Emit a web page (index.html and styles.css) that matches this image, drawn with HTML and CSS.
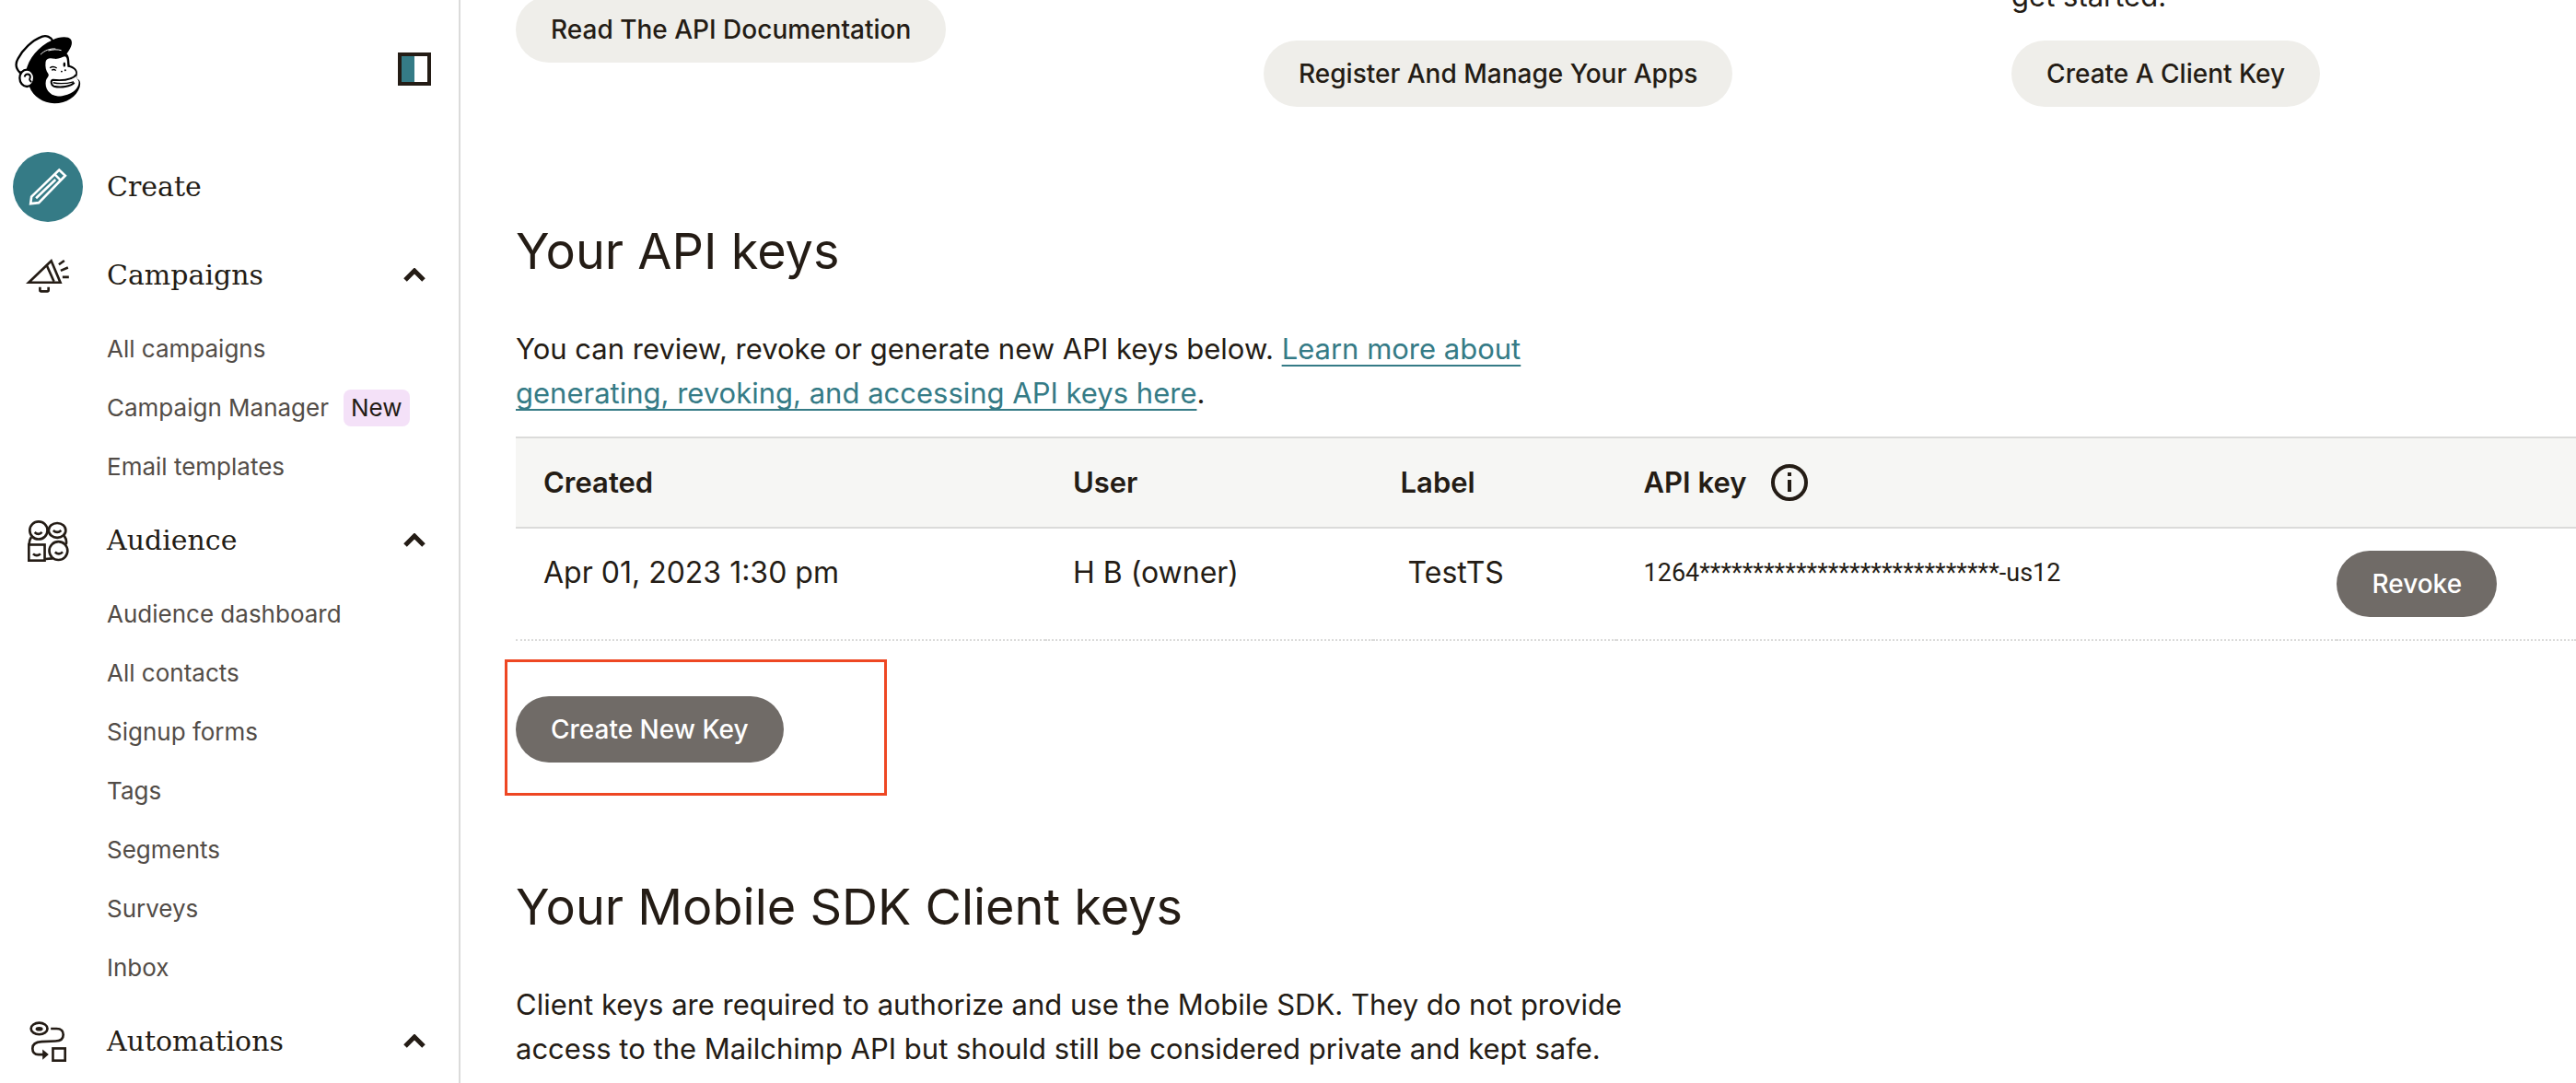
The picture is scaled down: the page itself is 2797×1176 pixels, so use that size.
FILE: index.html
```html
<!DOCTYPE html>
<html lang="en">
<head>
<meta charset="utf-8">
<meta name="viewport" content="width=device-width, initial-scale=1">
<title>API keys</title>
<link rel="stylesheet" href="styles.css">
</head>
<body>
<div class="app">
  <aside class="sidebar">
    <div class="sidebar-top">
      <a class="logo" href="#" aria-label="Home">
        <svg viewBox="46 48 221 232" width="74" height="76" aria-hidden="true">
          <path d="M64 176C50 162 48 146 57 130C72 101 104 68 138 56C152 51 166 58 173 70L120 120L86 170Z" fill="#fff" stroke="#000" stroke-width="7"/>
          <path d="M84 170C92 132 124 88 172 68C192 57 224 54 233 66C241 80 230 98 219 113C229 122 227 140 229 152C243 155 256 166 254 180C252 187 250 190 254 196C264 201 266 210 262 224C252 254 218 278 178 278C140 276 108 256 95 222Z" fill="#000"/>
          <path d="M149 140C151 127 165 126 178 130C193 132 204 123 213 122C222 124 220 142 222 157C236 158 251 167 249 180C247 190 256 196 259 206C260 236 220 255 190 254C160 252 145 226 150 203C152 193 162 188 158 180C150 170 147 155 149 140Z" fill="#fff"/>
          <path d="M251 182C240 198 208 203 173 200C165 202 166 216 176 221C200 227 232 222 244 209" fill="none" stroke="#000" stroke-width="6"/>
          <path d="M174 209C196 214 220 212 242 206M163 160C170 155 178 155 186 161M169 168C175 164 180 166 183 169" fill="none" stroke="#000" stroke-width="4"/>
          <ellipse cx="211" cy="149" rx="4" ry="8"/>
          <circle cx="202" cy="172" r="3"/><circle cx="214" cy="168" r="3"/>
          <path d="M132 116C145 102 165 95 182 97M158 103C172 99 188 98 201 102" fill="none" stroke="#fff" stroke-width="3"/>
          <ellipse cx="87" cy="194" rx="24" ry="28" fill="#fff" stroke="#000" stroke-width="7"/>
          <path d="M79 190C82 178 97 178 98 189C99 198 90 197 102 207" fill="none" stroke="#000" stroke-width="6"/>
        </svg>
      </a>
      <button class="toggle" type="button" aria-label="Collapse navigation"></button>
    </div>
    <nav>
      <a class="nav-head" href="#">
        <svg viewBox="41 43 230 230" width="76" height="76" aria-hidden="true">
          <circle cx="156" cy="158" r="115" fill="#357b86"/>
          <g fill="none" stroke="#fff" stroke-width="8"><path d="M193 102L213 121L126 210L99 213L102 190Z"/><path d="M178 116L199 137M117 195L181 134"/></g>
        </svg>
        <span class="nav-title">Create</span>
      </a>
      <button class="nav-head" type="button">
        <span class="nav-icon"><svg viewBox="84 390 144 118" width="48" height="39" fill="none" stroke="#241c15" stroke-width="8" aria-hidden="true"><path d="M93 471L167 400L197 471Z"/><path d="M152 414L176 468M130 486V496Q130 500 134 500H154Q158 500 158 496V486M192 412L210 399M198 432L222 422M204 453H225"/></svg></span>
        <span class="nav-title">Campaigns</span>
        <svg class="chevron" viewBox="0 0 24 16" width="24" height="16" aria-hidden="true"><path d="M2 13L12 3L22 13"/></svg>
      </button>
      <ul class="nav-list">
        <li><a href="#">All campaigns</a></li>
        <li><a href="#">Campaign Manager</a><span class="badge">New</span></li>
        <li><a href="#">Email templates</a></li>
      </ul>
      <button class="nav-head" type="button">
        <span class="nav-icon"><svg viewBox="90 68 136 142" width="45" height="47" fill="none" stroke="#241c15" stroke-width="8" aria-hidden="true"><circle cx="126" cy="104" r="29"/><ellipse cx="187" cy="104" rx="28" ry="24"/><rect x="94" y="151" width="52" height="52"/><circle cx="191" cy="171" r="30"/><path d="M102 126Q94 138 95 151M210 122Q220 136 216 150M148 198L172 196M113 110Q126 122 137 110M174 104Q187 116 200 104M108 181Q120 192 132 181M180 175Q193 187 205 175"/></svg></span>
        <span class="nav-title">Audience</span>
        <svg class="chevron" viewBox="0 0 24 16" width="24" height="16" aria-hidden="true"><path d="M2 13L12 3L22 13"/></svg>
      </button>
      <ul class="nav-list">
        <li><a href="#">Audience dashboard</a></li>
        <li><a href="#">All contacts</a></li>
        <li><a href="#">Signup forms</a></li>
        <li><a href="#">Tags</a></li>
        <li><a href="#">Segments</a></li>
        <li><a href="#">Surveys</a></li>
        <li><a href="#">Inbox</a></li>
      </ul>
      <button class="nav-head" type="button">
        <span class="nav-icon"><svg viewBox="95 86 124 136" width="41" height="45" fill="none" stroke="#241c15" stroke-width="8" aria-hidden="true"><ellipse cx="127" cy="110" rx="27" ry="19"/><ellipse cx="127" cy="111" rx="12" ry="7" fill="#241c15" stroke="none"/><path d="M165 110H184C200 110 206 120 206 130C206 145 195 151 180 151L135 153C115 154 105 162 105 175C105 188 112 195 125 195H142"/><path d="M138 178L158 195L138 212Z" fill="#241c15" stroke="none"/><rect x="172" y="175" width="40" height="40"/></svg></span>
        <span class="nav-title">Automations</span>
        <svg class="chevron" viewBox="0 0 24 16" width="24" height="16" aria-hidden="true"><path d="M2 13L12 3L22 13"/></svg>
      </button>
    </nav>
  </aside>
  <main class="main">
    <div class="cards">
      <div class="card card-short"><button class="btn" type="button">Read The API Documentation</button></div>
      <div class="card card-mid"><button class="btn" type="button">Register And Manage Your Apps</button></div>
      <div class="card"><p>get started!</p><button class="btn" type="button">Create A Client Key</button></div>
    </div>
    <section class="section">
      <h2>Your API keys</h2>
      <p class="copy">You can review, revoke or generate new API keys below. <a href="#">Learn more about generating, revoking, and accessing API keys here</a>.</p>
      <table class="keys">
        <colgroup><col class="col-created"><col class="col-user"><col class="col-label"><col class="col-key"><col></colgroup>
        <thead>
          <tr><th scope="col">Created</th><th scope="col">User</th><th scope="col">Label</th><th scope="col"><span class="th-key">API key
            <svg width="42" height="42" viewBox="0 0 42 42" fill="none" stroke="#241c15" stroke-width="4" role="img" aria-label="Info"><circle cx="21" cy="21" r="18"/><path d="M21 18V31M21 10V14"/></svg></span></th><td></td></tr>
        </thead>
        <tbody>
          <tr><td>Apr 01, 2023 1:30 pm</td><td>H B (owner)</td><td class="label-cell">TestTS</td><td class="key-cell">1264****************************-us12</td><td class="action-cell"><button class="btn btn-dark" type="button">Revoke</button></td></tr>
        </tbody>
      </table>
      <div class="highlight"><button class="btn btn-dark" type="button">Create New Key</button></div>
    </section>
    <section class="section section-sdk">
      <h2>Your Mobile SDK Client keys</h2>
      <p class="copy">Client keys are required to authorize and use the Mobile SDK. They do not provide access to the Mailchimp API but should still be considered private and kept safe.</p>
    </section>
  </main>
</div>
</body>
</html>
```
FILE: styles.css
```css
* { box-sizing: border-box; }

body {
  margin: 0;
  background: #fff;
  color: #241c15;
  font-family: Inter, "Liberation Sans", sans-serif;
  font-size: 31px;
  line-height: 48px;
}

h2, p, ul { margin: 0; padding: 0; font-weight: 400; }
button { font-family: inherit; color: inherit; border: 0; cursor: pointer; }
svg { display: block; flex: none; }

.app { display: flex; height: 100vh; overflow: hidden; }

/* Sidebar */
.sidebar {
  flex: none;
  width: 500px;
  overflow: hidden;
  border-right: 2px solid #dbdbda;
}
.sidebar-top {
  display: flex;
  align-items: center;
  justify-content: space-between;
  padding: 37px 30px 42px 15px;
}
.toggle {
  width: 36px;
  height: 36px;
  padding: 0;
  border: 4px solid #241c15;
  background: linear-gradient(to right, #357b86 50%, #fff 50%);
}
.nav-head {
  display: flex;
  align-items: center;
  gap: 26px;
  width: 100%;
  height: 96px;
  padding: 0 36px 0 14px;
  background: none;
  color: #241c15;
  text-align: left;
  text-decoration: none;
}
.nav-icon { display: flex; justify-content: center; width: 76px; }
.nav-title {
  flex: 1;
  font-family: "DejaVu Serif", serif;
  font-size: 30px;
  line-height: 40px;
}
.chevron { fill: none; stroke: #241c15; stroke-width: 5px; }
.nav-list { list-style: none; }
.nav-list li {
  display: flex;
  align-items: center;
  gap: 16px;
  height: 64px;
  padding-left: 116px;
  font-size: 26px;
}
.nav-list a { color: #524c47; text-decoration: none; }
.badge {
  padding: 0 8px;
  border-radius: 8px;
  background: #f4e1f8;
  line-height: 40px;
}

/* Content */
.main { flex: 1; min-width: 0; padding-left: 60px; }
.cards {
  display: grid;
  grid-template-columns: 53fr 53fr 40fr;
  align-items: start;
  margin-top: -28px;
}
.card-short { padding-top: 24px; }
.card-mid { padding-top: 72px; }
.card p { margin-bottom: 24px; }
.btn {
  display: block;
  height: 72px;
  padding: 0 38px;
  border-radius: 36px;
  background: #efeeea;
  font-size: 28px;
  font-weight: 500;
  line-height: 40px;
  white-space: nowrap;
}
.btn-dark { background: #706b67; color: #fff; }

.section { padding-top: 125px; }
.section-sdk { padding-top: 89px; }
h2 { margin-bottom: 50px; font-size: 54px; line-height: 64px; }
.copy { max-width: 1250px; }
.copy a {
  color: #357b86;
  text-decoration: underline;
  text-decoration-thickness: 2px;
  text-decoration-skip-ink: none;
  text-underline-offset: 6px;
}

.keys {
  width: 100%;
  margin-top: 23px;
  border-spacing: 0;
  table-layout: fixed;
  font-size: 32px;
}
.col-created { width: 25.7%; }
.col-user { width: 15.9%; }
.col-label { width: 11.8%; }
.col-key { width: 35%; }
.keys th, .keys td {
  padding: 24px 0 24px 30px;
  text-align: left;
  vertical-align: top;
  white-space: nowrap;
}
.keys thead th, .keys thead td {
  border: solid #dbdbda;
  border-width: 2px 0;
  background: #f6f6f4;
  font-size: 31px;
  font-weight: 600;
}
.keys tbody td { border-bottom: 2px dotted #dbdbda; }
.th-key { display: flex; align-items: center; gap: 26px; }
.keys .label-cell { padding-left: 38px; }
.keys .key-cell { font-family: Roboto, sans-serif; font-size: 27px; }
.keys .action-cell { padding-left: 0; }

.highlight {
  width: 415px;
  margin: 20px 0 0 -12px;
  padding: 37px 9px 33px;
  border: 3px solid #ee4723;
}
```
